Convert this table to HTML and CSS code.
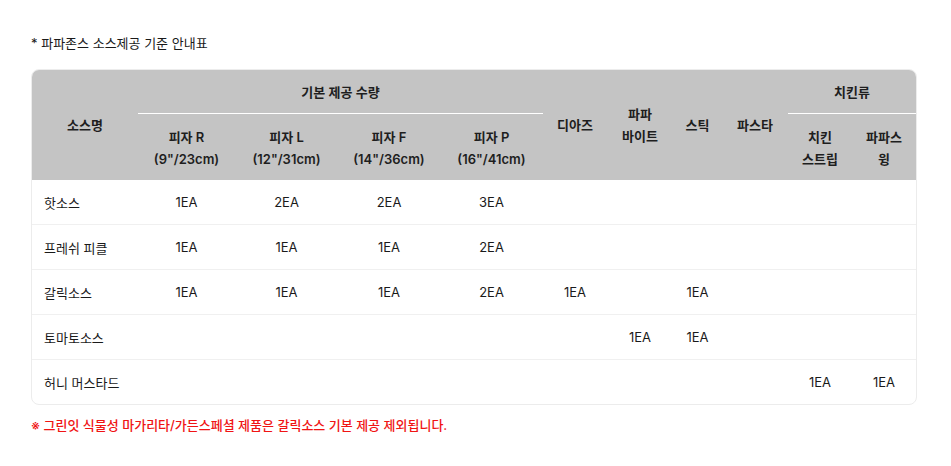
FILE: index.html
```html
<!DOCTYPE html>
<html lang="ko">
<head>
<meta charset="utf-8">
<link rel="stylesheet" href="styles.css">
</head>
<body>
<div class="wrap">
  <p class="title">* 파파존스 소스제공 기준 안내표</p>
  <div class="table-box">
    <table class="sauce">
      <colgroup>
        <col class="c-name"><col class="c-r"><col class="c-l"><col class="c-f"><col class="c-p">
        <col class="c-d"><col class="c-b"><col class="c-s"><col class="c-pa"><col class="c-cs"><col class="c-w">
      </colgroup>
      <thead>
        <tr>
          <th rowspan="2">소스명</th>
          <th colspan="4" class="group">기본 제공 수량</th>
          <th rowspan="2">디아즈</th>
          <th rowspan="2">파파<br>바이트</th>
          <th rowspan="2">스틱</th>
          <th rowspan="2">파스타</th>
          <th colspan="2" class="group">치킨류</th>
        </tr>
        <tr class="sub">
          <th>피자 R<br>(9"/23cm)</th>
          <th>피자 L<br>(12"/31cm)</th>
          <th>피자 F<br>(14"/36cm)</th>
          <th>피자 P<br>(16"/41cm)</th>
          <th>치킨<br>스트립</th>
          <th>파파스<br>윙</th>
        </tr>
      </thead>
      <tbody>
        <tr><td>핫소스</td><td>1EA</td><td>2EA</td><td>2EA</td><td>3EA</td><td></td><td></td><td></td><td></td><td></td><td></td></tr>
        <tr><td>프레쉬 피클</td><td>1EA</td><td>1EA</td><td>1EA</td><td>2EA</td><td></td><td></td><td></td><td></td><td></td><td></td></tr>
        <tr><td>갈릭소스</td><td>1EA</td><td>1EA</td><td>1EA</td><td>2EA</td><td>1EA</td><td></td><td>1EA</td><td></td><td></td><td></td></tr>
        <tr><td>토마토소스</td><td></td><td></td><td></td><td></td><td></td><td>1EA</td><td>1EA</td><td></td><td></td><td></td></tr>
        <tr><td>허니 머스타드</td><td></td><td></td><td></td><td></td><td></td><td></td><td></td><td></td><td>1EA</td><td>1EA</td></tr>
      </tbody>
    </table>
  </div>
  <p class="note">※ 그린잇 식물성 마가리타/가든스페셜 제품은 갈릭소스 기본 제공 제외됩니다.</p>
</div>
</body>
</html>
```
FILE: styles.css
```css
html, body {
  margin: 0;
  padding: 0;
  background: #fff;
}
body {
  font-family: Inter, "Noto Sans CJK KR", sans-serif;
  font-size: 13px;
  color: #1a1a1a;
}
.wrap {
  padding: 33px 34px 0 31px;
}
.title {
  margin: 0 0 16px 0;
  line-height: 20px;
  font-size: 13px;
  color: #1a1a1a;
}
.table-box {
  border: 1px solid #ececec;
  border-radius: 8px;
  overflow: hidden;
}
.sauce {
  width: 100%;
  border-collapse: collapse;
  table-layout: fixed;
}
.c-name { width: 106px; }
.c-r { width: 97px; }
.c-l { width: 103px; }
.c-f { width: 102px; }
.c-p { width: 103px; }
.c-d { width: 64px; }
.c-b { width: 66px; }
.c-s { width: 49px; }
.c-pa { width: 66px; }
.c-cs { width: 64px; }
.c-w { width: 64px; }
.sauce thead th {
  background: #c4c4c4;
  font-weight: 600;
  color: #1e1e1e;
  text-align: center;
  vertical-align: middle;
  line-height: 22px;
  padding: 0;
}
.sauce thead tr:first-child th {
  height: 43px;
}
.sauce thead th.group {
  border-bottom: 1px solid #fff;
}
.sauce thead tr.sub th {
  height: 64px;
  padding-top: 2px;
}
.sauce tbody td {
  height: 44px;
  padding: 0;
  text-align: center;
  vertical-align: middle;
  border-top: 1px solid #f0f0f0;
  color: #1a1a1a;
}
.sauce tbody tr:first-child td {
  border-top: 0;
}
.sauce tbody td:first-child {
  text-align: left;
  padding-left: 12px;
}
.note {
  margin: 10px 0 0 0;
  line-height: 20px;
  color: #f01414;
  font-weight: 500;
}
```
